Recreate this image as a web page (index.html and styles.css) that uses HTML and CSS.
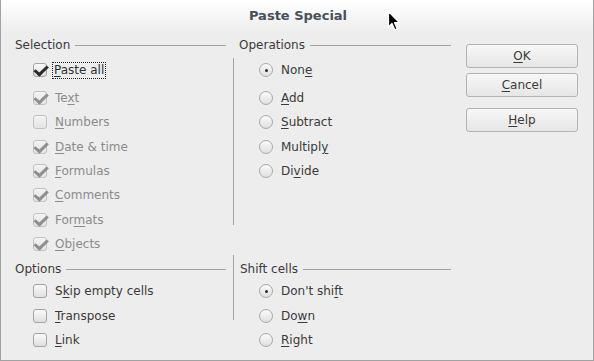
FILE: index.html
```html
<!DOCTYPE html>
<html>
<head>
<meta charset="utf-8">
<link rel="stylesheet" href="styles.css">
</head>
<body>
<div class="dialog">
  <div class="titlebar">Paste Special</div>
  <svg class="cursor" width="14" height="22" viewBox="0 0 14 22">
    <path d="M1.5 1.5 L1.5 17 L5 13.5 L7.8 19.8 L10.2 18.8 L7.5 12.7 L12.3 12.7 Z" fill="#000" stroke="#fff" stroke-width="1.2" stroke-linejoin="round"/>
  </svg>
  <div class="content">
    <div class="grid">
      <div class="col left top">
        <div class="hdr"><span>Selection</span><i></i></div>
        <div class="row first"><span class="cb checked"></span><span class="focus"><u>P</u>aste all</span></div>
        <div class="list">
          <div class="row dis"><span class="cb checked"></span><span>Te<u>x</u>t</span></div>
          <div class="row dis"><span class="cb"></span><span><u>N</u>umbers</span></div>
          <div class="row dis"><span class="cb checked"></span><span><u>D</u>ate &amp; time</span></div>
          <div class="row dis"><span class="cb checked"></span><span><u>F</u>ormulas</span></div>
          <div class="row dis"><span class="cb checked"></span><span><u>C</u>omments</span></div>
          <div class="row dis"><span class="cb checked"></span><span>For<u>m</u>ats</span></div>
          <div class="row dis"><span class="cb checked"></span><span><u>O</u>bjects</span></div>
        </div>
      </div>
      <div class="col right top">
        <div class="hdr"><span>Operations</span><i></i></div>
        <div class="vbody ops">
          <div class="row first"><span class="rb on"></span><span>Non<u>e</u></span></div>
          <div class="list">
            <div class="row"><span class="rb"></span><span><u>A</u>dd</span></div>
            <div class="row"><span class="rb"></span><span><u>S</u>ubtract</span></div>
            <div class="row"><span class="rb"></span><span>Multipl<u>y</u></span></div>
            <div class="row"><span class="rb"></span><span>Di<u>v</u>ide</span></div>
          </div>
        </div>
      </div>
      <div class="col left bottom">
        <div class="hdr"><span>Options</span><i></i></div>
        <div class="list2">
          <div class="row"><span class="cb"></span><span>S<u>k</u>ip empty cells</span></div>
          <div class="row"><span class="cb"></span><span><u>T</u>ranspose</span></div>
          <div class="row"><span class="cb"></span><span><u>L</u>ink</span></div>
        </div>
      </div>
      <div class="col right bottom">
        <div class="vbody shift">
          <div class="hdr"><span>Shift cells</span><i></i></div>
          <div class="list2">
            <div class="row"><span class="rb on"></span><span>Don't shi<u>f</u>t</span></div>
            <div class="row"><span class="rb"></span><span>Do<u>w</u>n</span></div>
            <div class="row"><span class="rb"></span><span><u>R</u>ight</span></div>
          </div>
        </div>
      </div>
    </div>
    <div class="buttons">
      <button class="btn"><u>O</u>K</button>
      <button class="btn"><u>C</u>ancel</button>
      <button class="btn help"><u>H</u>elp</button>
    </div>
  </div>
</div>
</body>
</html>
```
FILE: styles.css
```css
* { box-sizing: border-box; }
html, body { margin: 0; padding: 0; }
body {
  width: 594px;
  height: 361px;
  overflow: hidden;
  background: #ededed;
  font-family: "DejaVu Sans", sans-serif;
  font-size: 12px;
  color: #3a3a3a;
}
.dialog {
  position: relative;
  width: 594px;
  height: 361px;
  border-left: 1px solid #a2a2a2;
  border-right: 1px solid #a2a2a2;
  border-bottom: 1px solid #a2a2a2;
  display: flex;
  flex-direction: column;
}
.titlebar {
  height: 33px;
  flex: none;
  background: linear-gradient(#ffffff, #ededed);
  text-align: center;
  font-weight: bold;
  font-size: 13px;
  line-height: 32px;
  color: #47505a;
  padding-left: 2px;
}
.cursor {
  position: absolute;
  left: 386px;
  top: 10px;
}
.content {
  display: flex;
  padding: 4px 0 0 14px;
}
.grid {
  display: grid;
  grid-template-columns: 211px 218px;
  grid-template-rows: 218px auto;
  column-gap: 7px;
}
.col { display: flex; flex-direction: column; }
.hdr {
  display: flex;
  align-items: center;
  height: 16px;
  line-height: 16px;
  flex: none;
}
.hdr i {
  flex: 1;
  height: 1px;
  background: #a3a3a3;
  margin-left: 5px;
}
.right .hdr span { padding-left: 6px; }
.row {
  display: flex;
  align-items: center;
  height: 24.333px;
  flex: none;
}
.row u { text-decoration-thickness: 1px; text-underline-offset: 2px; }
.left .row { padding-left: 18px; }
.left .row.first { height: 24px; margin-top: 5px; }
.left .list { margin-top: 4px; }
.dis { color: #8b8b8b; }

.vbody {
  border-left: 1px solid #a3a3a3;
}
.ops {
  margin-top: 5px;
  height: 167px;
  padding-left: 25px;
}
.ops .row.first { height: 24px; }
.ops .list { margin-top: 4px; }

.bottom.left { padding-top: 6px; }
.shift {
  height: 65px;
  margin-top: 0;
  padding-top: 6px;
}
.shift .row { padding-left: 25px; }
.list2 { margin-top: 1.75px; }
.list2 .row { height: 24.5px; }

.cb {
  width: 14px;
  height: 14px;
  border: 1px solid #a4a4a4;
  border-radius: 3px;
  background: linear-gradient(#fbfbfb, #dedede);
  margin-right: 8px;
  position: relative;
  flex: none;
}
.dis .cb { border-color: #c2c2c2; background: linear-gradient(#f4f4f4, #e4e4e4); }
.cb.checked::after {
  content: "";
  position: absolute;
  left: 2px;
  top: -1px;
  width: 5px;
  height: 10px;
  border-right: 3px solid #2b2b2b;
  border-bottom: 3px solid #2b2b2b;
  transform: rotate(40deg) skewX(-6deg);
  transform-origin: 60% 60%;
}
.dis .cb.checked::after { border-color: #8f8f8f; }
.focus {
  outline: 1px dotted #222;
  outline-offset: 0;
  padding: 0 1px;
  margin-left: -2px;
  line-height: 15px;
  color: #2f2f2f;
}
.rb {
  width: 14px;
  height: 14px;
  border: 1px solid #a8a8a8;
  border-radius: 50%;
  background: linear-gradient(#fafafa, #e0e0e0);
  margin-right: 8px;
  position: relative;
  flex: none;
}
.rb.on::after {
  content: "";
  position: absolute;
  left: 4.5px;
  top: 4.5px;
  width: 3px;
  height: 3px;
  border-radius: 50%;
  background: #2b2b2b;
}

.buttons {
  display: flex;
  flex-direction: column;
  margin-left: 15px;
  margin-top: 7px;
}
.btn {
  width: 112px;
  height: 24px;
  margin: 0 0 5px 0;
  padding: 0;
  border: 1px solid #b3b3b3;
  border-radius: 3px;
  background: linear-gradient(#f7f7f7, #e6e6e6);
  font-family: "DejaVu Sans", sans-serif;
  font-size: 12px;
  color: #3a3a3a;
}
.btn u { text-underline-offset: 2px; }
.btn.help { margin-top: 6px; }
```
